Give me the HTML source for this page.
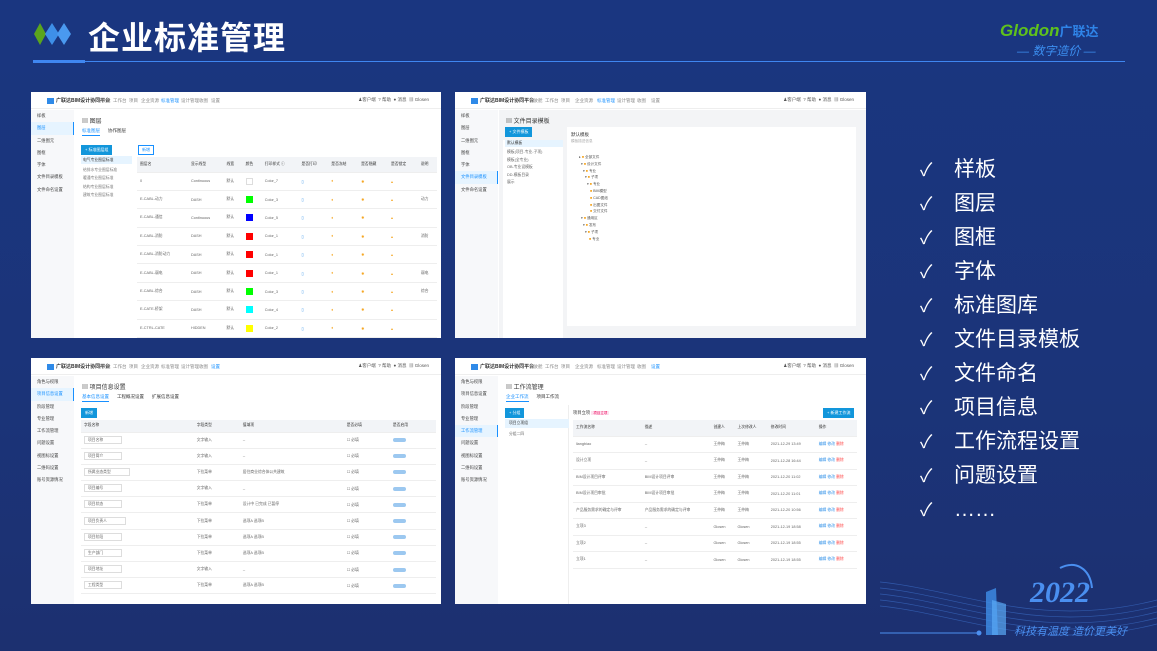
<!DOCTYPE html>
<html><head><meta charset="utf-8"><style>
*{margin:0;padding:0;box-sizing:border-box}
body{width:1157px;height:651px;overflow:hidden;background:#1b3479;font-family:"Liberation Sans","Noto Sans CJK SC",sans-serif;position:relative}
.bg{position:absolute;inset:0;background:linear-gradient(180deg,#1a3680 0%,#1b3479 60%,#1c3070 100%)}
.title{position:absolute;left:88px;top:13px;color:#fff;font-size:32px;font-weight:bold;letter-spacing:1px}
.line{position:absolute;left:33px;top:61px;width:1092px;height:1px;background:#3f86f0}
.line2{position:absolute;left:33px;top:60px;width:52px;height:3px;background:#3f86f0}
.logo{position:absolute;left:1000px;top:21px;font-style:italic;font-weight:bold;font-size:17px;color:#5fc21c}
.logo span{color:#2f84e8;font-size:13px;font-style:normal}
.slog{position:absolute;left:1017px;top:42px;color:#3c8ff0;font-size:12px;font-style:italic}
.list{position:absolute;left:920px;top:153px;color:#fff;font-size:21px;line-height:34px}
.list div span{display:inline-block;width:34px;font-size:18px}
.p{position:absolute;background:#fff;overflow:hidden;width:410px;height:246px;font-size:4px;color:#666}
.nav{position:absolute;left:0;top:0;right:0;height:17px;border-bottom:1px solid #eee;background:#fff}
.nav .lg{position:absolute;left:16px;top:5px;font-weight:bold;color:#333;font-size:5px}
.nav .lg b{display:inline-block;width:7px;height:6px;background:#2f8ae8;margin-right:2px;vertical-align:middle}
.nav .it{position:absolute;top:6px;color:#888;font-size:4.5px}
.nav .r{position:absolute;right:12px;top:5px;color:#555;font-size:4.5px}
.side{position:absolute;left:0;top:18px;width:43px;bottom:0;background:#f7f8fa}
.side div{height:12.3px;padding-left:6px;font-size:4.3px;line-height:12px;color:#444}
.side .on{background:#e6f4ff;color:#1890ff;border-right:1px solid #1890ff}
.ct{position:absolute;left:44px;top:18px;right:0;bottom:0}
.h{position:absolute;left:7px;top:6px;font-size:6px;color:#333}
.tabs{position:absolute;left:7px;top:18px;font-size:4.5px;color:#333}
.tabs span{margin-right:8px}
.tabs .a{color:#1890ff;border-bottom:1px solid #1890ff;padding-bottom:2px}
.btn{position:absolute;background:#1296db;color:#fff;font-size:4px;padding:2px 4px}
table{position:absolute;border-collapse:collapse;font-size:3.8px;color:#666}
td{border-bottom:1px solid #eee;padding:0 3px;white-space:nowrap}
thead td{background:#f2f4f7;color:#333}
.sw{display:inline-block;width:7px;height:7px;vertical-align:middle}
.o{color:#f5a623}.b{color:#2f90e8}.rd{color:#f44}
</style></head><body>
<div class="bg"></div>
<svg style="position:absolute;left:34px;top:23px" width="42" height="22"><polygon points="6,0 12,11 6,22 0,11" fill="#5aa51d"/><polygon points="18,0 25,11 18,22 11,11" fill="#3e8fe8"/><polygon points="30,0 37,11 30,22 23,11" fill="#4a99f0"/></svg>
<div class="title">企业标准管理</div>
<div class="line2"></div><div class="line"></div>
<div class="logo">Glodon<span>广联达</span></div>
<div class="slog">— 数字造价 —</div>

<!-- Panel 1 -->
<div class="p" style="left:31px;top:92px">
<div class="nav"><div class="lg"><b></b>广联达BIM设计协同平台</div>
<div class="it" style="left:66px">驾驶舱</div><div class="it" style="left:82px">工作台</div><div class="it" style="left:98px">项目</div><div class="it" style="left:110px">企业资源</div><div class="it" style="left:130px;color:#1890ff">标准管理</div><div class="it" style="left:150px">设计管理</div><div class="it" style="left:168px">收图</div><div class="it" style="left:180px">设置</div>
<div class="r">♟客户端 &nbsp;? 帮助 &nbsp;● 消息 &nbsp;▦ Glosen</div></div>
<div class="side"><div>样板</div><div class="on">图层</div><div>二维图元</div><div>图框</div><div>字体</div><div>文件目录模板</div><div>文件命名设置</div></div>
<div class="ct"><div class="h">▤ 图层</div><div class="tabs"><span class="a">标准图层</span><span>协作图层</span></div>
<div class="btn" style="left:6px;top:35px;">+ 标准图层组</div>
<div style="position:absolute;left:6px;top:46px;width:51px;height:8px;background:#e6f4ff;font-size:3.8px;padding:2px 2px;color:#333">电气专业图层标准</div>
<div style="position:absolute;left:8px;top:56px;font-size:3.8px;line-height:8.3px;color:#777">给排水专业图层标准<br>暖通专业图层标准<br>结构专业图层标准<br>建筑专业图层标准</div>
<div style="position:absolute;left:63px;top:35px;border:1px solid #1890ff;color:#1890ff;padding:1px 3px;font-size:4px">新增</div>
<table style="left:62px;top:47px;width:300px">
<thead><tr style="height:15px"><td>图层名</td><td>显示线型</td><td>线宽</td><td>颜色</td><td>打印样式 ⓘ</td><td>是否打印</td><td>是否冻结</td><td>是否隐藏</td><td>是否锁定</td><td>说明</td></tr></thead>
<tr style="height:18.4px"><td>0</td><td>Continuous</td><td>默认</td><td><span class="sw" style="border:1px solid #ddd"></span></td><td>Color_7</td><td class="b">▯</td><td class="o">♦</td><td class="o">✹</td><td class="o">▴</td><td></td></tr>
<tr style="height:18.4px"><td>E-CABL-动力</td><td>DASH</td><td>默认</td><td><span class="sw" style="background:#0f0"></span></td><td>Color_3</td><td class="b">▯</td><td class="o">♦</td><td class="o">✹</td><td class="o">▴</td><td>动力</td></tr>
<tr style="height:18.4px"><td>E-CABL-通信</td><td>Continuous</td><td>默认</td><td><span class="sw" style="background:#00f"></span></td><td>Color_5</td><td class="b">▯</td><td class="o">♦</td><td class="o">✹</td><td class="o">▴</td><td></td></tr>
<tr style="height:18.4px"><td>E-CABL-消防</td><td>DASH</td><td>默认</td><td><span class="sw" style="background:#f00"></span></td><td>Color_1</td><td class="b">▯</td><td class="o">♦</td><td class="o">✹</td><td class="o">▴</td><td>消防</td></tr>
<tr style="height:18.4px"><td>E-CABL-消防动力</td><td>DASH</td><td>默认</td><td><span class="sw" style="background:#f00"></span></td><td>Color_1</td><td class="b">▯</td><td class="o">♦</td><td class="o">✹</td><td class="o">▴</td><td></td></tr>
<tr style="height:18.4px"><td>E-CABL-弱电</td><td>DASH</td><td>默认</td><td><span class="sw" style="background:#f00"></span></td><td>Color_1</td><td class="b">▯</td><td class="o">♦</td><td class="o">✹</td><td class="o">▴</td><td>弱电</td></tr>
<tr style="height:18.4px"><td>E-CABL-综合</td><td>DASH</td><td>默认</td><td><span class="sw" style="background:#0f0"></span></td><td>Color_3</td><td class="b">▯</td><td class="o">♦</td><td class="o">✹</td><td class="o">▴</td><td>综合</td></tr>
<tr style="height:18.4px"><td>E-CATE-桥架</td><td>DASH</td><td>默认</td><td><span class="sw" style="background:#0ff"></span></td><td>Color_4</td><td class="b">▯</td><td class="o">♦</td><td class="o">✹</td><td class="o">▴</td><td></td></tr>
<tr style="height:18.4px"><td>E-CTRL-CATE</td><td>HIDDEN</td><td>默认</td><td><span class="sw" style="background:#ff0"></span></td><td>Color_2</td><td class="b">▯</td><td class="o">♦</td><td class="o">✹</td><td class="o">▴</td><td></td></tr>
</table></div></div>

<!-- Panel 2 -->
<div class="p" style="left:455px;top:92px;width:411px">
<div class="nav"><div class="lg"><b></b>广联达BIM设计协同平台</div>
<div class="it" style="left:74px">驾驶舱</div><div class="it" style="left:90px">工作台</div><div class="it" style="left:106px">项目</div><div class="it" style="left:120px">企业资源</div><div class="it" style="left:142px;color:#1890ff">标准管理</div><div class="it" style="left:162px">设计管理</div><div class="it" style="left:182px">收图</div><div class="it" style="left:196px">设置</div>
<div class="r">♟客户端 &nbsp;? 帮助 &nbsp;● 消息 &nbsp;▦ Glosen</div></div>
<div class="side"><div>样板</div><div>图层</div><div>二维图元</div><div>图框</div><div>字体</div><div class="on">文件目录模板</div><div>文件命名设置</div></div>
<div class="ct" style="background:#f3f4f6"><div class="h">▤ 文件目录模板</div>
<div style="position:absolute;left:4px;top:30px;width:60px;bottom:0;background:#fff"></div>
<div class="btn" style="left:6px;top:17px">+ 文件模板</div>
<div style="position:absolute;left:6px;top:30px;width:58px;height:7px;background:#e6f4ff;font-size:3.8px;padding:1px 2px;color:#333">默认模板</div>
<div style="position:absolute;left:8px;top:39px;font-size:3.8px;line-height:7.5px;color:#666">模板(项目-专业-子项)<br>模板(全专业)<br>OB-专业设模板<br>DD-模板目录<br>展示</div>
<div style="position:absolute;left:68px;top:17px;right:10px;bottom:12px;background:#fff"></div>
<div style="position:absolute;left:72px;top:22px;font-size:4.5px;color:#333">默认模板<br><span style="color:#aaa;font-size:3.6px">模板描述信息</span></div>
<div style="position:absolute;left:80px;top:44px;font-size:3.6px;line-height:6.8px;color:#555">
▸ <span class="o">■</span> 全部文件<br>&nbsp;&nbsp;▾ <span class="o">■</span> 设计文件<br>&nbsp;&nbsp;&nbsp;&nbsp;▾ <span class="o">■</span> 专业<br>&nbsp;&nbsp;&nbsp;&nbsp;&nbsp;&nbsp;▾ <span class="o">■</span> 子项<br>&nbsp;&nbsp;&nbsp;&nbsp;&nbsp;&nbsp;&nbsp;&nbsp;▾ <span class="o">■</span> 专业<br>&nbsp;&nbsp;&nbsp;&nbsp;&nbsp;&nbsp;&nbsp;&nbsp;&nbsp;&nbsp;&nbsp;<span class="o">■</span> BIM模型<br>&nbsp;&nbsp;&nbsp;&nbsp;&nbsp;&nbsp;&nbsp;&nbsp;&nbsp;&nbsp;&nbsp;<span class="o">■</span> CAD图纸<br>&nbsp;&nbsp;&nbsp;&nbsp;&nbsp;&nbsp;&nbsp;&nbsp;&nbsp;&nbsp;&nbsp;<span class="o">■</span> 出图文件<br>&nbsp;&nbsp;&nbsp;&nbsp;&nbsp;&nbsp;&nbsp;&nbsp;&nbsp;&nbsp;&nbsp;<span class="o">■</span> 交付文件<br>&nbsp;&nbsp;▾ <span class="o">■</span> 通用区<br>&nbsp;&nbsp;&nbsp;&nbsp;▾ <span class="o">■</span> 发布<br>&nbsp;&nbsp;&nbsp;&nbsp;&nbsp;&nbsp;▾ <span class="o">■</span> 子项<br>&nbsp;&nbsp;&nbsp;&nbsp;&nbsp;&nbsp;&nbsp;&nbsp;&nbsp;&nbsp;<span class="o">■</span> 专业</div>
</div></div>

<!-- Panel 3 -->
<div class="p" style="left:31px;top:358px">
<div class="nav"><div class="lg"><b></b>广联达BIM设计协同平台</div>
<div class="it" style="left:66px">驾驶舱</div><div class="it" style="left:82px">工作台</div><div class="it" style="left:98px">项目</div><div class="it" style="left:110px">企业资源</div><div class="it" style="left:130px">标准管理</div><div class="it" style="left:150px">设计管理</div><div class="it" style="left:168px">收图</div><div class="it" style="left:180px;color:#1890ff">设置</div>
<div class="r">♟客户端 &nbsp;? 帮助 &nbsp;● 消息 &nbsp;▦ Glosen</div></div>
<div class="side"><div>角色与权限</div><div class="on">项目信息设置</div><div>阶段管理</div><div>专业管理</div><div>工作流管理</div><div>问题设置</div><div>视图标设置</div><div>二维码设置</div><div>账号资源情况</div></div>
<div class="ct"><div class="h">▤ 项目信息设置</div><div class="tabs"><span class="a">基本信息设置</span><span>工程概况设置</span><span>扩展信息设置</span></div>
<div class="btn" style="left:6px;top:32px">新增</div>
<table style="left:6px;top:44px;width:355px">
<thead><tr style="height:12px"><td>字段名称</td><td>字段类型</td><td>值域项</td><td>是否必填</td><td>是否启用</td></tr></thead>
<tr style="height:16.2px"><td><span style="border:1px solid #ddd;padding:1px 18px 1px 3px">项目名称</span></td><td>文字输入</td><td>--</td><td>☐ 必填</td><td><span style="background:#9cc8f0;border-radius:3px;padding:0 6px">&nbsp;</span></td></tr>
<tr style="height:16.2px"><td><span style="border:1px solid #ddd;padding:1px 18px 1px 3px">项目简介</span></td><td>文字输入</td><td>--</td><td>☐ 必填</td><td><span style="background:#9cc8f0;border-radius:3px;padding:0 6px">&nbsp;</span></td></tr>
<tr style="height:16.2px"><td><span style="border:1px solid #ddd;padding:1px 18px 1px 3px">所属业态类型</span></td><td>下拉菜单</td><td>居住商业综合体公共建筑</td><td>☐ 必填</td><td><span style="background:#9cc8f0;border-radius:3px;padding:0 6px">&nbsp;</span></td></tr>
<tr style="height:16.2px"><td><span style="border:1px solid #ddd;padding:1px 18px 1px 3px">项目编号</span></td><td>文字输入</td><td>--</td><td>☐ 必填</td><td><span style="background:#9cc8f0;border-radius:3px;padding:0 6px">&nbsp;</span></td></tr>
<tr style="height:16.2px"><td><span style="border:1px solid #ddd;padding:1px 18px 1px 3px">项目状态</span></td><td>下拉菜单</td><td>设计中 已完成 已暂停</td><td>☐ 必填</td><td><span style="background:#9cc8f0;border-radius:3px;padding:0 6px">&nbsp;</span></td></tr>
<tr style="height:16.2px"><td><span style="border:1px solid #ddd;padding:1px 18px 1px 3px">项目负责人</span></td><td>下拉菜单</td><td>选项A 选项B</td><td>☐ 必填</td><td><span style="background:#9cc8f0;border-radius:3px;padding:0 6px">&nbsp;</span></td></tr>
<tr style="height:16.2px"><td><span style="border:1px solid #ddd;padding:1px 18px 1px 3px">项目阶段</span></td><td>下拉菜单</td><td>选项A 选项B</td><td>☐ 必填</td><td><span style="background:#9cc8f0;border-radius:3px;padding:0 6px">&nbsp;</span></td></tr>
<tr style="height:16.2px"><td><span style="border:1px solid #ddd;padding:1px 18px 1px 3px">生产部门</span></td><td>下拉菜单</td><td>选项A 选项B</td><td>☐ 必填</td><td><span style="background:#9cc8f0;border-radius:3px;padding:0 6px">&nbsp;</span></td></tr>
<tr style="height:16.2px"><td><span style="border:1px solid #ddd;padding:1px 18px 1px 3px">项目地址</span></td><td>文字输入</td><td>--</td><td>☐ 必填</td><td><span style="background:#9cc8f0;border-radius:3px;padding:0 6px">&nbsp;</span></td></tr>
<tr style="height:16.2px"><td><span style="border:1px solid #ddd;padding:1px 18px 1px 3px">工程类型</span></td><td>下拉菜单</td><td>选项A 选项B</td><td>☐ 必填</td><td><span style="background:#9cc8f0;border-radius:3px;padding:0 6px">&nbsp;</span></td></tr>
</table></div></div>

<!-- Panel 4 -->
<div class="p" style="left:455px;top:358px;width:411px">
<div class="nav"><div class="lg"><b></b>广联达BIM设计协同平台</div>
<div class="it" style="left:74px">驾驶舱</div><div class="it" style="left:90px">工作台</div><div class="it" style="left:106px">项目</div><div class="it" style="left:120px">企业资源</div><div class="it" style="left:142px">标准管理</div><div class="it" style="left:162px">设计管理</div><div class="it" style="left:182px">收图</div><div class="it" style="left:196px;color:#1890ff">设置</div>
<div class="r">♟客户端 &nbsp;? 帮助 &nbsp;● 消息 &nbsp;▦ Glosen</div></div>
<div class="side"><div>角色与权限</div><div>项目信息设置</div><div>阶段管理</div><div>专业管理</div><div class="on">工作流管理</div><div>问题设置</div><div>视图标设置</div><div>二维码设置</div><div>账号资源情况</div></div>
<div class="ct"><div class="h">▤ 工作流管理</div><div class="tabs"><span class="a">企业工作流</span><span>项目工作流</span></div>
<div style="position:absolute;left:69px;top:29px;width:1px;bottom:0;background:#eee"></div>
<div class="btn" style="left:6px;top:32px">+ 分组</div>
<div style="position:absolute;left:6px;top:43px;width:64px;height:9px;background:#e6f4ff;font-size:3.8px;padding:2px 4px;color:#333">项目立项组</div>
<div style="position:absolute;left:10px;top:56px;font-size:3.8px;color:#666">分组二四</div>
<div style="position:absolute;left:74px;top:34px;font-size:4.3px;color:#333">项目立项 <span style="background:#fde2f0;color:#e05;padding:0 2px;font-size:3.5px">项目立项</span></div>
<div class="btn" style="left:324px;top:32px">+ 新建工作流</div>
<table style="left:74px;top:44px;width:284px">
<thead><tr style="height:16px"><td>工作流名称</td><td>描述</td><td>创建人</td><td>上次修改人</td><td>修改时间</td><td>操作</td></tr></thead>
<tr style="height:16.5px"><td>liangbiao</td><td>--</td><td>王仲梅</td><td>王仲梅</td><td>2021-12-29 13:49</td><td><span class="b">编辑 修改</span> <span class="rd">删除</span></td></tr>
<tr style="height:16.5px"><td>设计立项</td><td>--</td><td>王仲梅</td><td>王仲梅</td><td>2021-12-28 16:44</td><td><span class="b">编辑 修改</span> <span class="rd">删除</span></td></tr>
<tr style="height:16.5px"><td>BIM设计项目评审</td><td>BIM设计项目评审</td><td>王仲梅</td><td>王仲梅</td><td>2021-12-20 11:02</td><td><span class="b">编辑 修改</span> <span class="rd">删除</span></td></tr>
<tr style="height:16.5px"><td>BIM设计项目审批</td><td>BIM设计项目审批</td><td>王仲梅</td><td>王仲梅</td><td>2021-12-20 11:01</td><td><span class="b">编辑 修改</span> <span class="rd">删除</span></td></tr>
<tr style="height:16.5px"><td>产品服务需求的确定与评审</td><td>产品服务需求的确定与评审</td><td>王仲梅</td><td>王仲梅</td><td>2021-12-20 10:56</td><td><span class="b">编辑 修改</span> <span class="rd">删除</span></td></tr>
<tr style="height:16.5px"><td>立项3</td><td>--</td><td>Glosen</td><td>Glosen</td><td>2021-12-19 18:58</td><td><span class="b">编辑 修改</span> <span class="rd">删除</span></td></tr>
<tr style="height:16.5px"><td>立项2</td><td>--</td><td>Glosen</td><td>Glosen</td><td>2021-12-19 18:55</td><td><span class="b">编辑 修改</span> <span class="rd">删除</span></td></tr>
<tr style="height:16.5px"><td>立项1</td><td>--</td><td>Glosen</td><td>Glosen</td><td>2021-12-19 18:55</td><td><span class="b">编辑 修改</span> <span class="rd">删除</span></td></tr>
</table></div></div>

<div class="list">
<div><span>✓</span>样板</div><div><span>✓</span>图层</div><div><span>✓</span>图框</div><div><span>✓</span>字体</div><div><span>✓</span>标准图库</div><div><span>✓</span>文件目录模板</div><div><span>✓</span>文件命名</div><div><span>✓</span>项目信息</div><div><span>✓</span>工作流程设置</div><div><span>✓</span>问题设置</div><div><span>✓</span>……</div>
</div>

<svg style="position:absolute;left:880px;top:560px" width="277" height="91">
<g fill="none" stroke="#3a6bc4" stroke-width="0.7" opacity="0.7">
<path d="M0,22 C80,30 160,70 277,40"/><path d="M0,28 C80,36 160,76 277,46"/><path d="M0,34 C80,42 160,82 277,52"/><path d="M0,40 C80,48 160,88 277,58"/><path d="M0,46 C80,54 160,94 277,64"/></g>
<line x1="0" y1="73" x2="98" y2="73" stroke="#4c8ff0" stroke-width="1"/><circle cx="99" cy="73" r="2.5" fill="#4c8ff0"/>
<polygon points="106,75 106,32 116,28 118,75" fill="#3e8fe8" opacity="0.8"/><polygon points="112,75 112,40 126,44 126,75" fill="#5aaaf5" opacity="0.7"/>
<text x="150" y="42" font-family="Liberation Serif" font-style="italic" font-weight="bold" font-size="30" fill="#4a8ff0">2022</text>
<path d="M180,8 C195,0 210,8 212,28" stroke="#4a8ff0" fill="none" stroke-width="2"/>
<text x="134" y="75" font-family="Liberation Sans,Noto Sans CJK SC,sans-serif" font-style="italic" font-size="11" fill="#4a8ff0">科技有温度 造价更美好</text>
</svg>
</body></html>
